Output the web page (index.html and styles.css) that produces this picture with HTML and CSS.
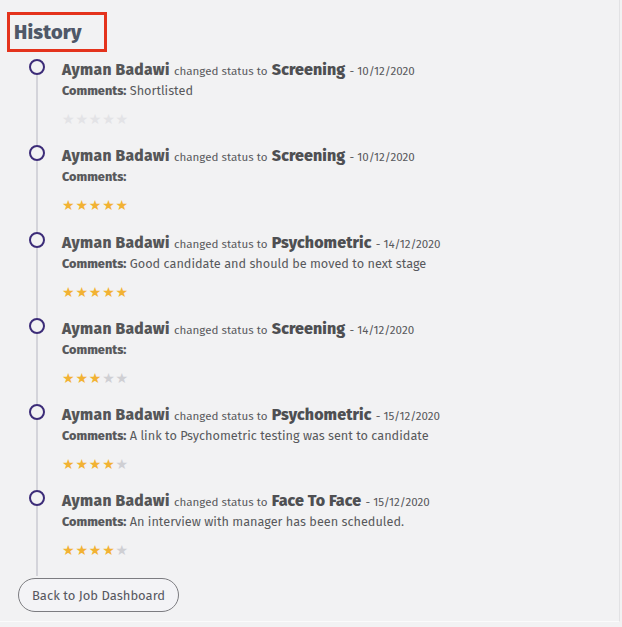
FILE: index.html
```html
<!DOCTYPE html>
<html>
<head>
<meta charset="utf-8">
<link rel="stylesheet" href="styles.css">
</head>
<body>
<div class="page">
  <div class="title-box"><h2 class="title">History</h2></div>
  <ul class="timeline">
    <li class="item">
      <div class="marker"><span class="dot"></span><span class="line"></span></div>
      <div class="body">
        <div class="head"><b class="name">Ayman Badawi</b> <span class="small">changed status to</span> <b class="status">Screening</b> <span class="small">- 10/12/2020</span></div>
        <div class="comment"><b>Comments:</b> Shortlisted</div>
        <div class="stars faded"><span>★</span><span>★</span><span>★</span><span>★</span><span>★</span></div>
      </div>
    </li>
    <li class="item">
      <div class="marker"><span class="dot"></span><span class="line"></span></div>
      <div class="body">
        <div class="head"><b class="name">Ayman Badawi</b> <span class="small">changed status to</span> <b class="status">Screening</b> <span class="small">- 10/12/2020</span></div>
        <div class="comment"><b>Comments:</b></div>
        <div class="stars"><span class="on">★</span><span class="on">★</span><span class="on">★</span><span class="on">★</span><span class="on">★</span></div>
      </div>
    </li>
    <li class="item">
      <div class="marker"><span class="dot"></span><span class="line"></span></div>
      <div class="body">
        <div class="head"><b class="name">Ayman Badawi</b> <span class="small">changed status to</span> <b class="status">Psychometric</b> <span class="small">- 14/12/2020</span></div>
        <div class="comment"><b>Comments:</b> Good candidate and should be moved to next stage</div>
        <div class="stars"><span class="on">★</span><span class="on">★</span><span class="on">★</span><span class="on">★</span><span class="on">★</span></div>
      </div>
    </li>
    <li class="item">
      <div class="marker"><span class="dot"></span><span class="line"></span></div>
      <div class="body">
        <div class="head"><b class="name">Ayman Badawi</b> <span class="small">changed status to</span> <b class="status">Screening</b> <span class="small">- 14/12/2020</span></div>
        <div class="comment"><b>Comments:</b></div>
        <div class="stars"><span class="on">★</span><span class="on">★</span><span class="on">★</span><span>★</span><span>★</span></div>
      </div>
    </li>
    <li class="item">
      <div class="marker"><span class="dot"></span><span class="line"></span></div>
      <div class="body">
        <div class="head"><b class="name">Ayman Badawi</b> <span class="small">changed status to</span> <b class="status">Psychometric</b> <span class="small">- 15/12/2020</span></div>
        <div class="comment"><b>Comments:</b> A link to Psychometric testing was sent to candidate</div>
        <div class="stars"><span class="on">★</span><span class="on">★</span><span class="on">★</span><span class="on">★</span><span>★</span></div>
      </div>
    </li>
    <li class="item last">
      <div class="marker"><span class="dot"></span><span class="line"></span></div>
      <div class="body">
        <div class="head"><b class="name">Ayman Badawi</b> <span class="small">changed status to</span> <b class="status">Face To Face</b> <span class="small">- 15/12/2020</span></div>
        <div class="comment"><b>Comments:</b> An interview with manager has been scheduled.</div>
        <div class="stars"><span class="on">★</span><span class="on">★</span><span class="on">★</span><span class="on">★</span><span>★</span></div>
      </div>
    </li>
  </ul>
  <button class="back">Back to Job Dashboard</button>
</div>
</body>
</html>
```
FILE: styles.css
```css
html, body {
  margin: 0;
  padding: 0;
  background: #f2f2f3;
}
body {
  font-family: "Fira Sans", Lato, "Open Sans", sans-serif;
  color: #555658;
}
.page {
  width: 620px;
  height: 622px;
  box-sizing: border-box;
  border-right: 1px solid #e2e2e4;
  border-bottom: 1px solid #fbfbfb;
  padding-top: 12px;
}
.title-box {
  margin-left: 7px;
  width: 100px;
  height: 40px;
  box-sizing: border-box;
  border: 3px solid #e4331c;
  display: flex;
  align-items: center;
  padding-left: 4px;
}
.title {
  margin: 0;
  font-size: 20px;
  font-weight: 800;
  color: #4f5868;
  letter-spacing: 0.2px;
}
.timeline {
  list-style: none;
  margin: 7px 0 0 0;
  padding: 0;
}
.item {
  display: flex;
  height: 86.3px;
}
.item.last {
  height: 86px;
}
.marker {
  width: 62px;
  flex: none;
  padding-left: 29px;
  box-sizing: border-box;
  display: flex;
  flex-direction: column;
}
.dot {
  width: 16px;
  height: 16px;
  box-sizing: border-box;
  border: 2.5px solid #3c2c78;
  border-radius: 50%;
  flex: none;
}
.line {
  flex: 1;
  width: 2px;
  margin-left: 7px;
  background: #d4d4da;
}
.body {
  flex: 1;
}
.head {
  height: 22px;
  line-height: 22px;
  white-space: nowrap;
}
.name {
  font-size: 15.6px;
  font-weight: 800;
  color: #555658;
  letter-spacing: 0.3px;
}
.status {
  font-size: 16px;
  font-weight: 800;
  color: #4e4f52;
  letter-spacing: 0.1px;
}
.small {
  font-size: 11.6px;
  color: #58595c;
}
.comment {
  height: 20px;
  line-height: 20px;
  font-size: 12.7px;
  color: #58595c;
}
.comment b {
  font-weight: 800;
}
.stars {
  margin-top: 9px;
  height: 18px;
  line-height: 18px;
  display: flex;
  gap: 0;
  font-family: "DejaVu Sans", sans-serif;
  font-size: 14px;
}
.stars span {
  color: #cfcfd3;
  width: 13.4px;
  text-align: left;
}
.stars span.on {
  color: #f2b233;
}
.stars.faded span {
  color: #e3e3e6;
}
.back {
  margin: 2px 0 0 18px;
  width: 161px;
  height: 34px;
  border: 1px solid #7c7c80;
  border-radius: 17px;
  background: #f3f3f6;
  font-family: "Fira Sans", Lato, "Open Sans", sans-serif;
  font-size: 13px;
  color: #56575f;
  padding: 0;
}
```
